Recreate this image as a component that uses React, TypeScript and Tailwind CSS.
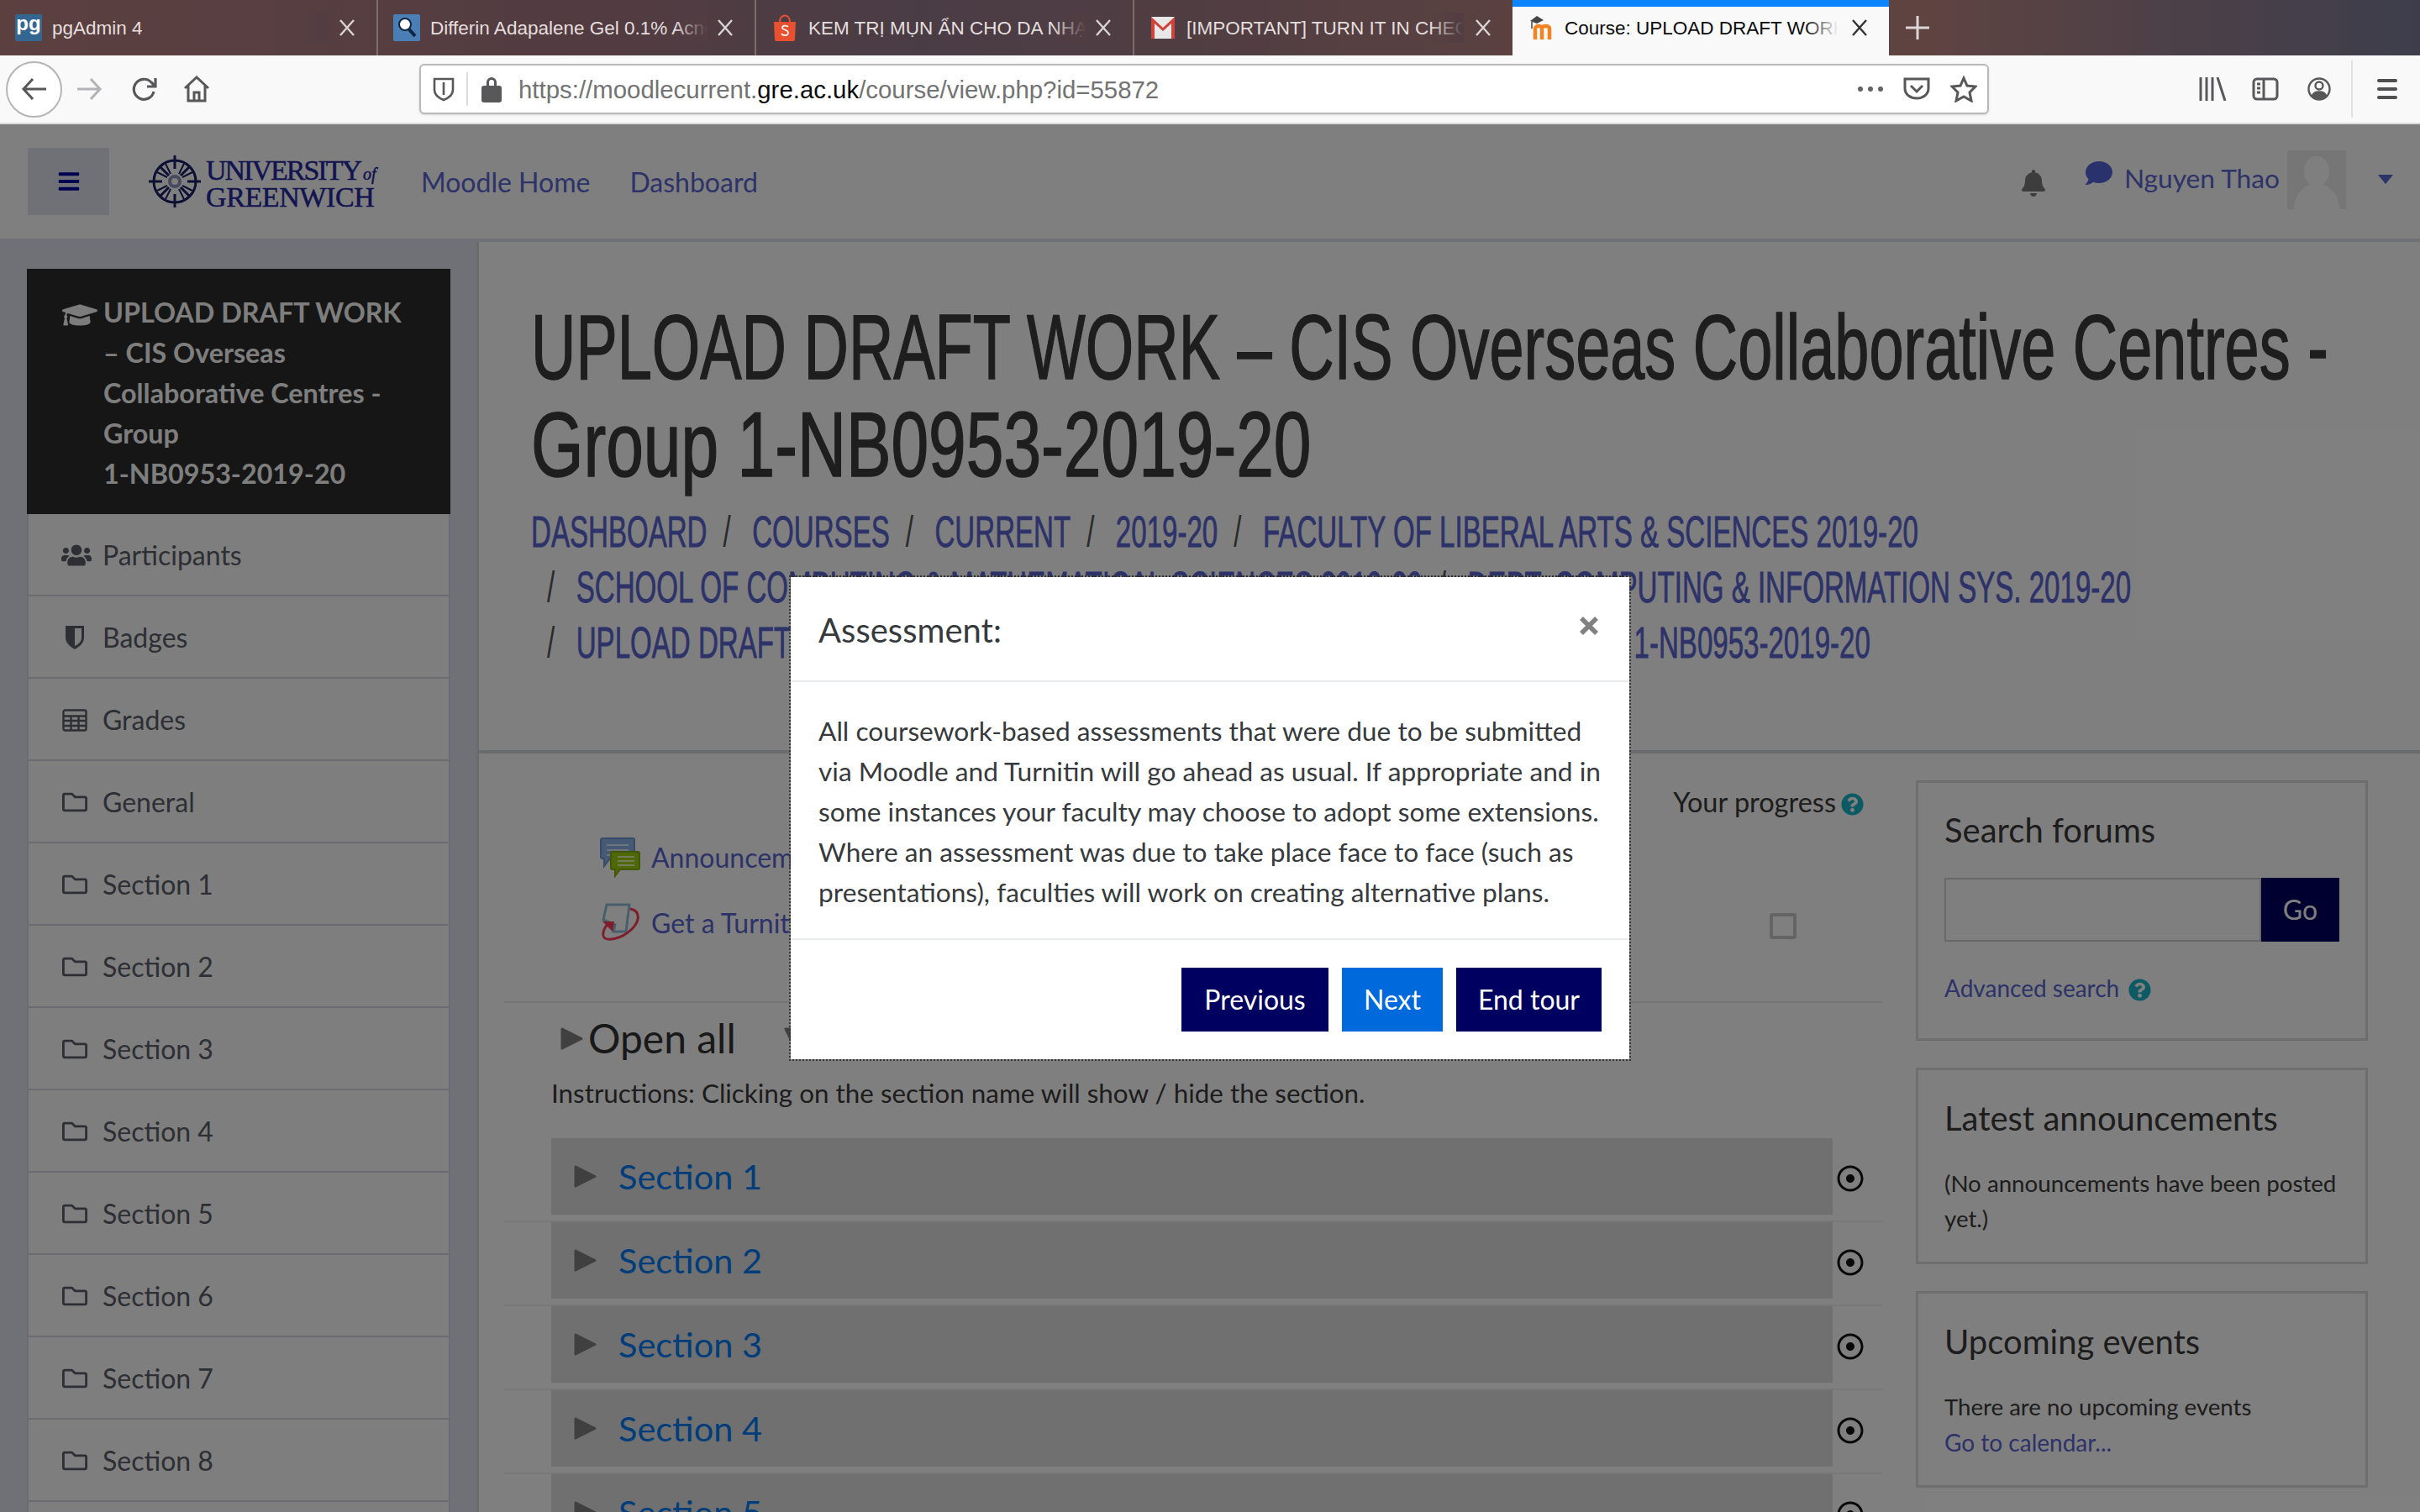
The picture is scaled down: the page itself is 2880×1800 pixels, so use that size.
import React from 'react'
import { FaBars, FaBell, FaComment, FaGraduationCap, FaQuestionCircle, FaRegDotCircle, FaRegFolder, FaUsers } from 'react-icons/fa'

const tabs = [
    { title: 'pgAdmin 4', icon: 'pg' },
    { title: 'Differin Adapalene Gel 0.1% Acne Treatment', icon: 'search' },
    { title: 'KEM TRỊ MỤN ẨN CHO DA NHẠY CẢM', icon: 'shop' },
    { title: '[IMPORTANT] TURN IT IN CHECK', icon: 'mail' },
]

const crumbs = [
    'DASHBOARD',
    'COURSES',
    'CURRENT',
    '2019-20',
    'FACULTY OF LIBERAL ARTS & SCIENCES 2019-20',
    'SCHOOL OF COMPUTING & MATHEMATICAL SCIENCES 2019-20',
    'DEPT. COMPUTING & INFORMATION SYS. 2019-20',
    'UPLOAD DRAFT WORK – CIS OVERSEAS COLLABORATIVE CENTRES - GROUP 1-NB0953-2019-20',
]

const navRows = ['General', 'Section 1', 'Section 2', 'Section 3', 'Section 4', 'Section 5', 'Section 6', 'Section 7', 'Section 8', 'Section 9']

const Favicon = ({ kind }: { kind: string }) => {
    if (kind === 'pg') {
        return <div className="w-8 h-8 shrink-0 rounded-[2px] bg-[#336791] text-white text-[24px] font-bold leading-[22px] text-center font-['Liberation_Sans',sans-serif]">pg</div>
    }
    if (kind === 'search') {
        return (
            <svg className="w-8 h-8 shrink-0" viewBox="0 0 32 32">
                <rect width="32" height="32" rx="2" fill="#4a7fb5" />
                <circle cx="14" cy="12" r="7" fill="#fff" stroke="#10253f" strokeWidth="2" />
                <path d="M19 18l7 8" stroke="#10253f" strokeWidth="4" />
            </svg>
        )
    }
    if (kind === 'shop') {
        return (
            <svg className="w-8 h-8 shrink-0" viewBox="0 0 32 32">
                <path d="M3 9h26l-1 21a2 2 0 0 1-2 2H6a2 2 0 0 1-2-2z" fill="#e8502f" />
                <path d="M10 9c0-10 12-10 12 0" fill="none" stroke="#e8502f" strokeWidth="2" />
                <path d="M20 15c-2-2-7-2-7 1s7 2 7 6-6 4-8 1" fill="none" stroke="#fff" strokeWidth="1.6" />
            </svg>
        )
    }
    return (
        <svg className="w-8 h-8 shrink-0" viewBox="0 0 32 32">
            <rect x="2" y="3" width="28" height="26" fill="#e8e8e8" />
            <path d="M2 3l14 13L30 3v26h-4V11L16 20 6 11v18H2z" fill="#d0433a" />
        </svg>
    )
}

const CloseX = ({ color = '#d8d4d4' }: { color?: string }) => (
    <svg className="w-5 h-5 shrink-0" viewBox="0 0 20 20">
        <path d="M2 1l16 18M18 1L2 19" stroke={color} strokeWidth="2.4" />
    </svg>
)

const Tab = ({ title, icon, last }: { title: string, icon: string, last: boolean }) => (
    <div className={`w-[450px] h-[66px] flex items-center pl-[18px] pr-[25px] ${last ? '' : 'border-r-2 border-[#7d6c6c]'}`}>
        <Favicon kind={icon} />
        <div className="relative ml-3 pt-[2px] w-[330px] overflow-hidden whitespace-nowrap text-[22.500px] text-[#e4dede] font-['Liberation_Sans',sans-serif]">
            {title}
            <div className="absolute right-0 top-0 bottom-0 w-10 bg-gradient-to-r from-transparent to-[#513d42]" />
        </div>
        <div className="ml-auto"><CloseX /></div>
    </div>
)

const TabBar = () => (
    <div className="h-[66px] flex shrink-0 bg-[linear-gradient(90deg,#5c4040_0%,#523c41_25%,#4a3c45_38%,#523e42_52%,#5e4340_66%,#5e4341_80%,#4c4048_90%,#3d3e4c_100%)]">
        {tabs.map((t, i) => <Tab key={t.title} title={t.title} icon={t.icon} last={i === tabs.length - 1} />)}
        <div className="w-[448px] h-[66px] bg-[#f9f9fa] border-t-[8px] border-[#0a84ff] flex items-center pl-[20px] pr-[25px]">
            <svg className="w-8 h-8 shrink-0 -mt-2" viewBox="0 0 32 32">
                <path d="M7 30V17c0-4 8-4 8 0v13M15 17c0-4 9-4 9 0v13" fill="none" stroke="#f58220" strokeWidth="4.500" />
                <path d="M1 8l8-6 8 5-8 4z" fill="#444" />
                <path d="M3 9v8" stroke="#444" strokeWidth="1.500" />
            </svg>
            <div className="relative ml-[10px] w-[326px] -mt-[6px] overflow-hidden whitespace-nowrap text-[22.500px] text-[#0c0c0d] font-['Liberation_Sans',sans-serif]">
                Course: UPLOAD DRAFT WORK – CIS
                <div className="absolute right-0 top-0 bottom-0 w-10 bg-gradient-to-r from-transparent to-[#f9f9fa]" />
            </div>
            <div className="ml-auto -mt-2"><CloseX color="#333" /></div>
        </div>
        <div className="ml-[18px] w-[32px] flex items-center justify-center">
            <svg className="w-7 h-7" viewBox="0 0 28 28"><path d="M14 0v28M0 14h28" stroke="#dcd6d6" strokeWidth="3" /></svg>
        </div>
    </div>
)

const ICON = '#58585a'

const Toolbar = () => (
    <div className="h-[82px] shrink-0 flex items-center bg-[#f9f9fa] border-b-2 border-[#dcdcde]">
        <div className="ml-[7px] w-[67px] h-[67px] rounded-full bg-white border-2 border-[#b5b5b7] flex items-center justify-center">
            <svg className="w-8 h-8" viewBox="0 0 32 32" fill="none" stroke={ICON} strokeWidth="3"><path d="M30 16H3M14 4L3 16l11 12" /></svg>
        </div>
        <svg className="ml-4 w-8 h-8" viewBox="0 0 32 32" fill="none" stroke="#b3b3b5" strokeWidth="3"><path d="M2 16h27M18 4l11 12-11 12" /></svg>
        <svg className="ml-[34px] w-8 h-8" viewBox="0 0 32 32" fill="none" stroke={ICON} strokeWidth="3.2"><path d="M27 19a12 12 0 1 1-3-11l4 4M29 3v10H19" /></svg>
        <svg className="ml-[30px] w-8 h-8" viewBox="0 0 32 32" fill="none" stroke={ICON} strokeWidth="3"><path d="M2 15L16 2l14 13M6 12v18h20V12M13 30v-10h6v10" /></svg>
        <div className="ml-[249px] w-[1868px] h-[60px] bg-white border-2 border-[#b9b9bb] rounded-[6px] flex items-center shadow-sm">
            <svg className="ml-[14px] w-[26px] h-[30px]" viewBox="0 0 26 30" fill="none" stroke={ICON} strokeWidth="2.6"><path d="M2 3h22v13c0 6-6 10-11 12C8 26 2 22 2 16z" /><path d="M13 7v15" /></svg>
            <div className="ml-[14px] w-[2px] h-10 bg-[#dcdcde]" />
            <svg className="ml-4 w-6 h-8" viewBox="0 0 24 32" fill={ICON}><path d="M6 13V8a6 6 0 0 1 12 0v5h-3V8a3 3 0 0 0-6 0v5z" /><rect x="0" y="12" width="24" height="20" rx="3" /></svg>
            <div className="ml-[20px] mt-[2px] text-[29.400px] text-[#737373] whitespace-nowrap font-['Liberation_Sans',sans-serif]">
                https://moodlecurrent.<span className="text-[#0c0c0d]">gre.ac.uk</span>/course/view.php?id=55872
            </div>
            <div className="ml-auto flex gap-[6px]">
                <span className="w-[6px] h-[6px] rounded-full bg-[#636365]" />
                <span className="w-[6px] h-[6px] rounded-full bg-[#636365]" />
                <span className="w-[6px] h-[6px] rounded-full bg-[#636365]" />
            </div>
            <svg className="ml-6 w-8 h-7" viewBox="0 0 32 28" fill="none" stroke={ICON} strokeWidth="3"><path d="M2 2h28v11c0 16-28 16-28 0z" /><path d="M9 10l7 7 7-7" /></svg>
            <svg className="ml-6 mr-3 w-8 h-8" viewBox="0 0 32 32" fill="none" stroke={ICON} strokeWidth="3"><path d="M16 3l4 9 10 1-7 7 2 10-9-5-9 5 2-10-7-7 10-1z" /></svg>
        </div>
        <svg className="ml-[250px] w-[33px] h-7" viewBox="0 0 33 28" fill="none" stroke={ICON} strokeWidth="3"><path d="M2 0v28M9 0v28M16 0v28M22 0l9 28" /></svg>
        <svg className="ml-[30px] w-8 h-7" viewBox="0 0 32 28" fill="none" stroke={ICON} strokeWidth="3"><rect x="2" y="2" width="28" height="24" rx="4" /><path d="M14 2v24" /><path d="M6 8h4M6 13h4M6 18h4" /></svg>
        <svg className="ml-[34px] w-7 h-7" viewBox="0 0 28 28" fill="none" stroke={ICON} strokeWidth="2.4"><circle cx="14" cy="14" r="12.5" /><circle cx="14" cy="10" r="4.5" /><path d="M6 22c2-6 14-6 16 0-4 4-12 4-16 0z" fill={ICON} /></svg>
        <div className="ml-[24px] w-[2px] h-[68px] bg-[#e2e2e4]" />
        <div className="ml-[29px] w-6 flex flex-col gap-[6px]">
            <span className="h-1 rounded bg-[#4f4f51]" />
            <span className="h-1 rounded bg-[#4f4f51]" />
            <span className="h-1 rounded bg-[#4f4f51]" />
        </div>
    </div>
)

const Logo = () => (
    <div className="flex items-center ml-[47px]">
        <svg className="w-[62px] h-[62px] shrink-0" viewBox="0 0 62 62" fill="none" stroke="#1b1f66" strokeWidth="3">
            <circle cx="31" cy="31" r="25" />
            <circle cx="31" cy="31" r="6" stroke="#8f93bd" strokeWidth="4" />
            <path d="M31 0v16M31 46v16M0 31h16M46 31h16M13 13l11 11M49 13L38 24M13 49l11-11M49 49L38 38" />
            <path d="M20 10l6 12M42 10l-6 12M10 20l12 6M52 20l-12 6M10 42l12-6M52 42l-12-6M20 52l6-12M42 52l-6-12" strokeWidth="2" />
        </svg>
        <div className="ml-[6px] mt-[4px] w-[200px] font-['Liberation_Serif',serif] text-[#2428a0] text-[34px] leading-[27px] [-webkit-text-stroke:0.5px_#2428a0]">
            <div className="whitespace-nowrap tracking-[-2px]">UNIVERSITY<span className="italic text-[20px] ml-[3px] tracking-normal">of</span></div>
            <div className="whitespace-nowrap tracking-[-0.4px]">GREENWICH</div>
        </div>
    </div>
)

const Header = () => (
    <div className="h-[140px] shrink-0 bg-white border-b-[4px] border-[#e0e3ee] flex items-center relative">
        <div className="ml-[33px] w-[97px] h-[80px] bg-[#dee2ee] flex items-center justify-center text-[#0000a0] text-[28px]">
            <FaBars />
        </div>
        <Logo />
        <a className="ml-[56px] mt-[2px] text-[32px] text-[#5a65d2]">Moodle Home</a>
        <a className="ml-[47px] mt-[2px] text-[32px] text-[#5a65d2]">Dashboard</a>
        <FaBell className="ml-auto text-[#7a7a7a] text-[32px] mt-[4px]" />
        <FaComment className="ml-[46px] -mt-[20px] text-[#5264d8] text-[32px]" />
        <span className="ml-[14px] -mt-[6px] text-[31.700px] text-[#5a65d2]">Nguyen Thao</span>
        <div className="ml-[9px] w-[70px] h-[70px] -mt-[4px] bg-[#ededed] overflow-hidden">
            <svg viewBox="0 0 70 70" className="w-full h-full"><ellipse cx="35" cy="25" rx="15" ry="18" fill="#fff" /><path d="M8 70c0-20 14-30 27-30s27 10 27 30z" fill="#fff" /></svg>
        </div>
        <div className="ml-[38px] mr-[32px] w-0 h-0 -mt-[6px] border-l-[9px] border-r-[9px] border-t-[11px] border-l-transparent border-r-transparent border-t-[#5a65d2]" />
    </div>
)

const ShieldIcon = () => (
    <svg className="w-[30px] h-[30px]" viewBox="0 0 30 30">
        <path d="M4 1h22v14c0 7-6 11-11 14C10 26 4 22 4 15z" fill="#5a5e68" />
        <path d="M15 4h8v11c0 5-4 8-8 10z" fill="#fdfdfd" />
    </svg>
)

const GridIcon = () => (
    <svg className="w-[30px] h-[27px]" viewBox="0 0 30 27" fill="none" stroke="#5a5e68" strokeWidth="2.4">
        <rect x="1.500" y="1.500" width="27" height="24" rx="2" />
        <path d="M1.500 8.500h27M1.500 14h27M1.500 20h27M10.500 8.500v17M19.500 8.500v17" />
    </svg>
)

const NavRow = ({ icon, label }: { icon: React.ReactNode, label: string }) => (
    <div className="h-[98px] pt-[2px] border-b-2 border-x-2 border-[#d6d9e2] bg-[#fdfdfd] flex items-center">
        <div className="w-[88px] pl-[40px] text-[30px] text-[#5a5e68]">{icon}</div>
        <span className="text-[32px] text-[#5a5e68]">{label}</span>
    </div>
)

const Sidebar = () => (
    <div className="w-[567px] shrink-0 bg-[#dee2ee] pt-[32px] pl-[32px] pr-[31px]">
        <div className="h-[292px] bg-[#2c2c2c] pt-[28px] pl-[42px] pr-[40px] flex">
            <FaGraduationCap className="text-[#f8f8f8] text-[42px] shrink-0 mt-[6px]" />
            <div className="ml-[7px] text-[32.300px] leading-[48px] font-bold text-[#fcfcfc]">
                UPLOAD DRAFT WORK – CIS Overseas Collaborative Centres - Group <span className="whitespace-nowrap">1-NB0953-2019-20</span>
            </div>
        </div>
        <NavRow icon={<FaUsers className="text-[36px] -ml-[1px]" />} label="Participants" />
        <NavRow icon={<ShieldIcon />} label="Badges" />
        <NavRow icon={<GridIcon />} label="Grades" />
        {navRows.map(r => <NavRow key={r} icon={<FaRegFolder />} label={r} />)}
    </div>
)

const PageTitle = () => (
    <div className="h-[609px] shrink-0 overflow-hidden border-b-[4px] border-[#d4d6dc] pl-[62px] pt-[67px] font-['Liberation_Sans',sans-serif]">
        <h1 className="text-[110px] leading-[116px] text-[#3c3c3c] [-webkit-text-stroke:1.5px_#3c3c3c] whitespace-nowrap">
            <span className="block w-[3200px] origin-top-left scale-x-[0.672]">UPLOAD DRAFT WORK – CIS Overseas Collaborative Centres -</span>
            <span className="block w-[3200px] origin-top-left scale-x-[0.73]">Group 1-NB0953-2019-20</span>
        </h1>
        <div className="w-[3380px] origin-top-left scale-x-[0.636] flex flex-wrap mt-[13px]">
            {crumbs.map((c, i) => (
                <div key={c} className="flex text-[52px] leading-[66px] text-[#5a65d2] whitespace-nowrap [-webkit-text-stroke:0.8px_#5a65d2]">
                    {i > 0 && <span className="pl-[30px] pr-[40px] text-[#555] [-webkit-text-stroke:0]">/</span>}
                    <a>{c}</a>
                </div>
            ))}
        </div>
    </div>
)

const HelpIcon = () => <FaQuestionCircle className="text-[#1ab2c8] text-[27px] shrink-0" />

const Triangle = () => (
    <svg className="w-[27px] h-[27px] shrink-0" viewBox="0 0 27 27"><path d="M2 2l23 11.500L2 25z" fill="#808080" stroke="#808080" strokeWidth="3" strokeLinejoin="round" /></svg>
)

const SectionRow = ({ n }: { n: number }) => (
    <div className="h-[100px] shrink-0 flex border-b-2 border-[#f0f0f0] items-start">
        <div className="ml-[56px] w-[1525px] h-[91px] bg-[#e0e0e0] flex items-center pl-[27px]">
            <Triangle />
            <a className="ml-[26px] text-[41.500px] text-[#007af4]">Section {n}</a>
        </div>
        <FaRegDotCircle className="ml-[5px] mt-[32px] text-[32px] text-[#111]" />
    </div>
)

const Course = () => (
    <div className="w-[1670px] shrink-0 pl-[30px] flex flex-col">
        <div className="h-[297px] shrink-0 border-b-2 border-[#e8e8e8] relative">
            <div className="flex items-center justify-end pr-[22px] pt-[34px] text-[32.500px] text-[#3a3a3a]">
                Your progress<span className="ml-[6px] mt-[4px]"><HelpIcon /></span>
            </div>
            <div className="flex items-center pl-[114px] mt-[16px] h-[50px]">
                <svg className="w-12 h-12 shrink-0" viewBox="0 0 48 48">
                    <path d="M3 1h36a2 2 0 0 1 2 2v22H12l-7 9v-9H3a2 2 0 0 1-2-2V3a2 2 0 0 1 2-2z" fill="#8fb4ea" stroke="#6f95d0" strokeWidth="2" />
                    <path d="M8 9h26M8 15h26M8 21h26" stroke="#dbe8fa" strokeWidth="2" />
                    <path d="M15 17h30a2 2 0 0 1 2 2v17a2 2 0 0 1-2 2H24l-6 8v-8h-3a2 2 0 0 1-2-2V19a2 2 0 0 1 2-2z" fill="#a0d010" stroke="#86b00c" strokeWidth="2" />
                    <path d="M21 23h20M21 28h20M21 33h20" stroke="#e8f6b0" strokeWidth="2" />
                </svg>
                <a className="ml-[13px] text-[32px] text-[#5a65d2]">Announcements</a>
            </div>
            <div className="flex items-center pl-[116px] mt-[28px] h-[50px] relative">
                <svg className="w-[46px] h-[48px] shrink-0" viewBox="0 0 46 48" fill="none">
                    <path d="M6 2h27l-4 32H14l2-8-14-6z" stroke="#8fbfd8" strokeWidth="3" />
                    <path d="M34 7c12 2 12 14 2 24-12 12-32 16-34 8-1-5 2-11 6-14" stroke="#ff3a5a" strokeWidth="3" />
                    <path d="M1 22h14l-2 12z" fill="#ff3a5a" />
                </svg>
                <a className="ml-[13px] text-[32px] text-[#5a65d2]">Get a Turnitin Report</a>
                <div className="absolute left-[1506px] top-[13px] w-[32px] h-[31px] rounded-[3px] border-[4px] border-[#c8c8c8]" />
            </div>
        </div>
        <div className="flex items-center pl-[67px] mt-[11px] h-[62px] text-[48px] leading-none text-[#333]">
            <Triangle />
            <span className="ml-[6px]">Open all</span>
            <svg className="ml-[57px] w-[27px] h-[27px] rotate-90" viewBox="0 0 27 27"><path d="M2 2l23 11.500L2 25z" fill="#808080" stroke="#808080" strokeWidth="3" strokeLinejoin="round" /></svg>
            <span className="ml-[8px]">Close all</span>
        </div>
        <div className="pl-[56px] mt-[10px] h-[78px] text-[31.400px] leading-[48px] text-[#3a3a3a]">
            Instructions: Clicking on the section name will show / hide the section.
        </div>
        <SectionRow n={1} />
        <SectionRow n={2} />
        <SectionRow n={3} />
        <SectionRow n={4} />
        <SectionRow n={5} />
    </div>
)

const Block = ({ title, className, children }: { title: string, className: string, children: React.ReactNode }) => (
    <div className={`border-[3px] border-[#dcdcdc] pl-[31px] pr-[10px] ${className}`}>
        <h3 className="text-[40px] leading-[48px] text-[#3a3a3a]">{title}</h3>
        {children}
    </div>
)

const Blocks = () => (
    <div className="ml-[40px] w-[538px] shrink-0 pt-[32px] flex flex-col gap-[32px]">
        <Block title="Search forums" className="h-[310px] pt-[32px]">
            <div className="flex mt-[33px] h-[76px]">
                <div className="w-[377px] border-2 border-[#d0d0d0] bg-white" />
                <div className="w-[93px] bg-[#000060] text-white text-[32px] flex items-center justify-center">Go</div>
            </div>
            <div className="flex items-center mt-[34px]">
                <a className="text-[28px] text-[#5a65d2]">Advanced search</a>
                <span className="ml-[11px] mt-[4px]"><HelpIcon /></span>
            </div>
        </Block>
        <Block title="Latest announcements" className="h-[234px] pt-[33px]">
            <p className="mt-[33px] text-[27.700px] leading-[42px] text-[#3a3a3a]">(No announcements have been posted yet.)</p>
        </Block>
        <Block title="Upcoming events" className="h-[234px] pt-[33px]">
            <p className="mt-[33px] text-[27.600px] leading-[42px] text-[#3a3a3a]">There are no upcoming events</p>
            <a className="block text-[28px] leading-[42px] text-[#5a65d2]">Go to calendar...</a>
        </Block>
    </div>
)

const Modal = () => (
    <div className="absolute left-[941px] top-[539px] w-[998px] h-[574px] bg-white outline-2 outline-dotted outline-[#333] flex flex-col text-[#373a3c]">
        <div className="h-[125px] shrink-0 border-b-2 border-[#e9ecef] flex items-center pl-[33px] pr-[36px]">
            <h5 className="text-[40px] pt-[2px]">Assessment:</h5>
            <svg className="ml-auto -mt-[8px] w-[24px] h-[24px]" viewBox="0 0 24 24"><path d="M3 3l18 18M21 3L3 21" stroke="#808080" strokeWidth="5.500" /></svg>
        </div>
        <div className="h-[307px] shrink-0 border-b-2 border-[#e9ecef] pl-[33px] pr-[10px] pt-[34px] text-[31.700px] leading-[48px]">
            All coursework-based assessments that were due to be submitted via Moodle and Turnitin will go ahead as usual. If appropriate and in some instances your faculty may choose to adopt some extensions. Where an assessment was due to take place face to face (such as presentations), faculties will work on creating alternative plans.
        </div>
        <div className="flex justify-end gap-4 pt-[33px] pr-[33px] text-[32px] text-white">
            <button className="w-[175px] h-[76px] bg-[#000060]">Previous</button>
            <button className="w-[120px] h-[76px] bg-[#0069db]">Next</button>
            <button className="w-[173px] h-[76px] bg-[#000060]">End tour</button>
        </div>
    </div>
)

const App = () => {
    return (
        <div className="w-[2880px] h-[1800px] overflow-hidden flex flex-col font-['Lato',sans-serif]">
            <TabBar />
            <Toolbar />
            <div className="relative flex-1 overflow-hidden bg-white flex flex-col">
                <Header />
                <div className="flex flex-1 min-h-0">
                    <Sidebar />
                    <div className="flex-1 min-w-0 border-l-[3px] border-[#d4d6dc] flex flex-col">
                        <PageTitle />
                        <div className="flex">
                            <Course />
                            <Blocks />
                        </div>
                    </div>
                </div>
                <div className="absolute inset-0 bg-black/50" />
                <Modal />
            </div>
        </div>
    )
}

export default App
